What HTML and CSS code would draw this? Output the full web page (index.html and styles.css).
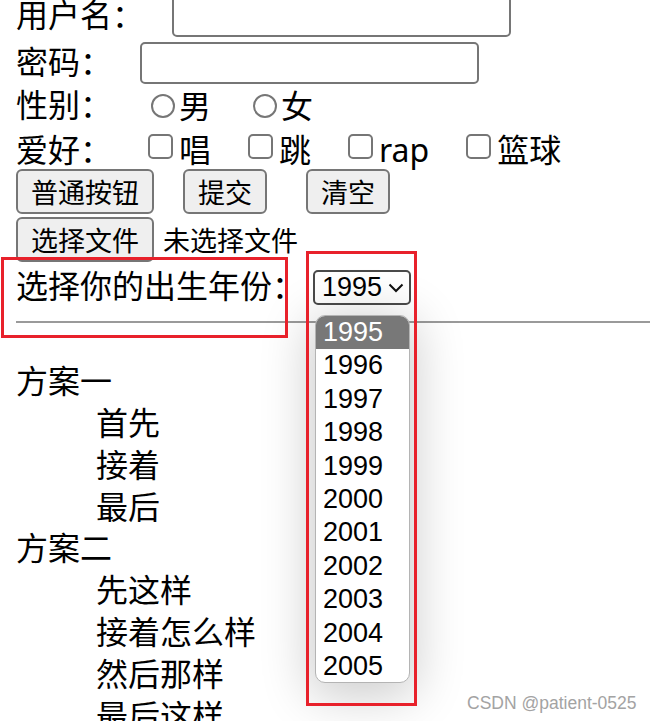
FILE: index.html
```html
<!DOCTYPE html>
<html lang="zh-CN">
<head>
<meta charset="utf-8">
<title>表单</title>
<link rel="stylesheet" href="styles.css">
</head>
<body>
<div class="page">
  <form class="form">
    <div class="row r1">
      <span class="label">用户名：</span>
      <input class="text-input" type="text">
    </div>
    <div class="row r2">
      <span class="label">密码：</span>
      <input class="text-input" type="password">
    </div>
    <div class="row r3">
      <span class="label">性别：</span>
      <input class="radio first" type="radio" name="sex"><span class="opt-text">男</span>
      <input class="radio" type="radio" name="sex"><span class="opt-text">女</span>
    </div>
    <div class="row r4">
      <span class="label">爱好：</span>
      <input class="check first" type="checkbox"><span class="opt-text">唱</span>
      <input class="check" type="checkbox"><span class="opt-text">跳</span>
      <input class="check" type="checkbox"><span class="opt-text">rap</span>
      <input class="check" type="checkbox"><span class="opt-text">篮球</span>
    </div>
    <div class="row r5">
      <button class="btn" type="button">普通按钮</button>
      <button class="btn gap-s" type="submit">提交</button>
      <button class="btn gap-l" type="reset">清空</button>
    </div>
    <div class="row r6">
      <button class="btn" type="button">选择文件</button>
      <span class="file-name">未选择文件</span>
    </div>
    <div class="row r7">
      <span class="label">选择你的出生年份：</span>
      <div class="select">
        <span class="select-value">1995</span>
        <svg class="chev" width="16" height="10" viewBox="0 0 16 10"><path d="M1.5 1.5 L8 8 L14.5 1.5" fill="none" stroke="#111" stroke-width="2"/></svg>
      </div>
    </div>
  </form>
  <hr class="rule">
  <dl class="plans">
    <dt>方案一</dt>
    <dd>首先</dd>
    <dd>接着</dd>
    <dd>最后</dd>
    <dt>方案二</dt>
    <dd>先这样</dd>
    <dd>接着怎么样</dd>
    <dd>然后那样</dd>
    <dd>最后这样</dd>
  </dl>
</div>

<ul class="dropdown">
  <li class="opt selected">1995</li>
  <li class="opt">1996</li>
  <li class="opt">1997</li>
  <li class="opt">1998</li>
  <li class="opt">1999</li>
  <li class="opt">2000</li>
  <li class="opt">2001</li>
  <li class="opt">2002</li>
  <li class="opt">2003</li>
  <li class="opt">2004</li>
  <li class="opt">2005</li>
</ul>

<div class="mark mark-label"></div>
<div class="mark mark-select"></div>

<div class="watermark">CSDN @patient-0525</div>
</body>
</html>
```

FILE: styles.css
```css
html, body {
  margin: 0;
  padding: 0;
  background: #ffffff;
  overflow: hidden;
}

body {
  width: 650px;
  height: 721px;
  position: relative;
  font-family: "Noto Sans", "Noto Sans CJK SC", sans-serif;
  color: #000;
}

.page {
  margin-top: -6px;
  padding-left: 16px;
}

.form {
  margin: 0;
}

.row {
  display: flex;
  align-items: center;
  font-size: 32px;
  line-height: 40px;
}

.r1 { height: 44px; }
.r2 { height: 50px; }
.r3 { height: 36px; }
.r4 { height: 45px; }
.r5 { height: 45px; }
.r6 { height: 45px; margin-top: 3px; }
.r7 { height: 50px; }

.label {
  white-space: nowrap;
  padding-bottom: 3px;
}

.r4 .label {
  padding-bottom: 0;
  padding-top: 6px;
}

.text-input {
  -webkit-appearance: none;
  appearance: none;
  box-sizing: border-box;
  width: 339px;
  height: 42px;
  margin: 0 0 0 28px;
  padding: 0;
  border: 2px solid #767676;
  border-radius: 5px;
  background: #fff;
}

.radio,
.check {
  -webkit-appearance: none;
  appearance: none;
  box-sizing: border-box;
  margin: 0;
  border: 2px solid #767676;
  background: #fff;
  flex: none;
}

.radio {
  width: 24px;
  height: 24px;
  border-radius: 50%;
  margin-left: 42px;
}

.radio.first { margin-left: 39px; }

.check {
  width: 25px;
  height: 25px;
  border-radius: 5px;
  margin-left: 37px;
}

.check.first { margin-left: 36px; }

.r3 .opt-text { margin-left: 4px; }
.r4 .opt-text { margin-left: 6px; padding-top: 6px; }

.btn {
  box-sizing: border-box;
  height: 45px;
  margin: 0;
  padding: 0 13px;
  border: 2px solid #767676;
  border-radius: 6px;
  background: #efefef;
  font-family: "Noto Sans CJK SC", sans-serif;
  font-size: 27px;
  line-height: 40px;
  color: #000;
}

.gap-s { margin-left: 29px; }
.gap-l { margin-left: 39px; }

.file-name {
  margin-left: 9px;
  font-family: "Noto Sans CJK SC", sans-serif;
  font-size: 27px;
}

.select {
  box-sizing: border-box;
  width: 98px;
  height: 35px;
  margin-left: 9px;
  padding: 0 5px 0 7px;
  display: flex;
  align-items: center;
  justify-content: space-between;
  border: 2px solid #4a4a4a;
  border-radius: 5px;
  background: #fff;
}

.select-value {
  font-family: "Liberation Sans", Arial, sans-serif;
  font-size: 27px;
  line-height: 31px;
}

.chev {
  display: block;
  margin-top: 1px;
}

.rule {
  margin: 9px -16px 0 0;
  height: 0;
  border: 0;
  border-top: 2px solid #9a9a9a;
}

.plans {
  margin: 37px 0 0 0;
  font-size: 32px;
  line-height: 41.86px;
}

.plans dt { margin: 0; }
.plans dd { margin: 0 0 0 80px; }

/* open select popup (overlay) */
.dropdown {
  position: absolute;
  left: 315px;
  top: 315px;
  width: 95px;
  height: 368px;
  box-sizing: border-box;
  margin: 0;
  padding: 0;
  list-style: none;
  background: #fff;
  border: 1px solid #b4b4b4;
  border-radius: 10px;
  overflow: hidden;
  box-shadow: 0 8px 50px 6px rgba(0, 0, 0, 0.2);
  font-family: "Liberation Sans", Arial, sans-serif;
  font-size: 27px;
}

.opt {
  height: 33.4px;
  line-height: 33.4px;
  padding-left: 7px;
  color: #000;
}

.opt.selected {
  background: #787878;
  color: #fff;
}

/* red annotation frames (overlay) */
.mark {
  position: absolute;
  box-sizing: border-box;
  border: 3.5px solid #e8212b;
}

.mark-label {
  left: 1px;
  top: 257px;
  width: 287px;
  height: 81px;
}

.mark-select {
  left: 306px;
  top: 251px;
  width: 111px;
  height: 455px;
}

.watermark {
  position: absolute;
  left: 467px;
  top: 693px;
  font-family: "Liberation Sans", Arial, sans-serif;
  font-size: 17.5px;
  color: #a3a3a3;
  white-space: nowrap;
}
```
